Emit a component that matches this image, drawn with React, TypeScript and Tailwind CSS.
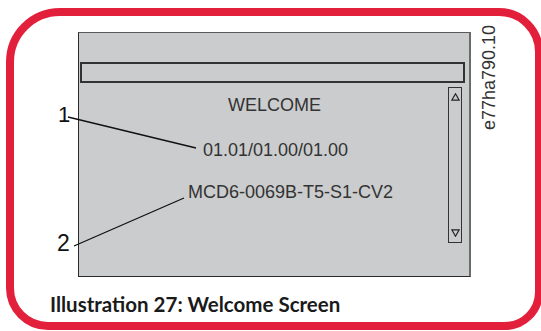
const lines = [
  { text: "WELCOME", ml: "ml-[149px]", mt: "mt-0" },
  { text: "01.01/01.00/01.00", ml: "ml-[124px]", mt: "mt-[25px]" },
  { text: "MCD6-0069B-T5-S1-CV2", ml: "ml-[109px]", mt: "mt-[22px]" },
];

function Triangle({ down }: { down?: boolean }) {
  return (
    <svg width="9" height="8" viewBox="0 0 9 8">
      <path
        d={down ? "M0.8 0.8 L8.2 0.8 L4.5 7.2 Z" : "M4.5 0.8 L8.2 7.2 L0.8 7.2 Z"}
        fill="none"
        stroke="#222"
        strokeWidth="1.2"
        strokeLinejoin="miter"
      />
    </svg>
  );
}

export default function App() {
  return (
    <div className="relative w-[541px] h-[331px] bg-white overflow-hidden font-['Liberation_Sans',Arial,sans-serif]">
      <div className="ml-[6px] mt-[8px] w-[537px] h-[322px] border-8 border-[#e3203c] rounded-tl-[54px] rounded-tr-[44px] rounded-bl-[42px] rounded-br-[38px] flex flex-col">
        <div className="flex pl-[64px] pt-[16px]">
          <div className="w-[393px] h-[245px] bg-[#cbcccd] border border-[#2a2a2a] border-t-[#5a5a5a] border-r-2 border-r-[#6a6a6a]">
            <div className="ml-[1px] mt-[29px] w-[385px] h-[21px] border-2 border-[#333]" />
            <div className="flex items-start">
              <div className="w-[369px] pt-[12px] flex flex-col items-start text-[18px] leading-[20px] text-[#333]">
                {lines.map((l, i) => (
                  <span key={i} className={`${l.ml} ${l.mt}`}>
                    {l.text}
                  </span>
                ))}
              </div>
              <div className="mt-[4px] w-[14px] h-[156px] border border-[#333] flex flex-col items-center justify-between py-[5px]">
                <Triangle />
                <Triangle down />
              </div>
            </div>
          </div>
          <div className="ml-[9px] -mt-[10px] h-[108px] text-[18px] leading-[18px] text-[#333] [writing-mode:vertical-rl] rotate-180">
            e77ha790.10
          </div>
        </div>
        <div className="pl-[36px] mt-[16px] font-['Lato',sans-serif] font-bold text-[20.5px] leading-[22px] text-[#1a1a1a]">
          Illustration 27: Welcome Screen
        </div>
      </div>

      <svg className="absolute left-0 top-0" width="541" height="331">
        <line x1="68" y1="117" x2="196" y2="148" stroke="#111" strokeWidth="1.3" />
        <line x1="74" y1="246" x2="184" y2="198" stroke="#111" strokeWidth="1.3" />
      </svg>
      <span className="absolute left-[58px] top-[104px] text-[22px] leading-[22px] text-[#111]">1</span>
      <span className="absolute left-[57px] top-[232px] text-[23px] leading-[23px] text-[#111]">2</span>
    </div>
  );
}
